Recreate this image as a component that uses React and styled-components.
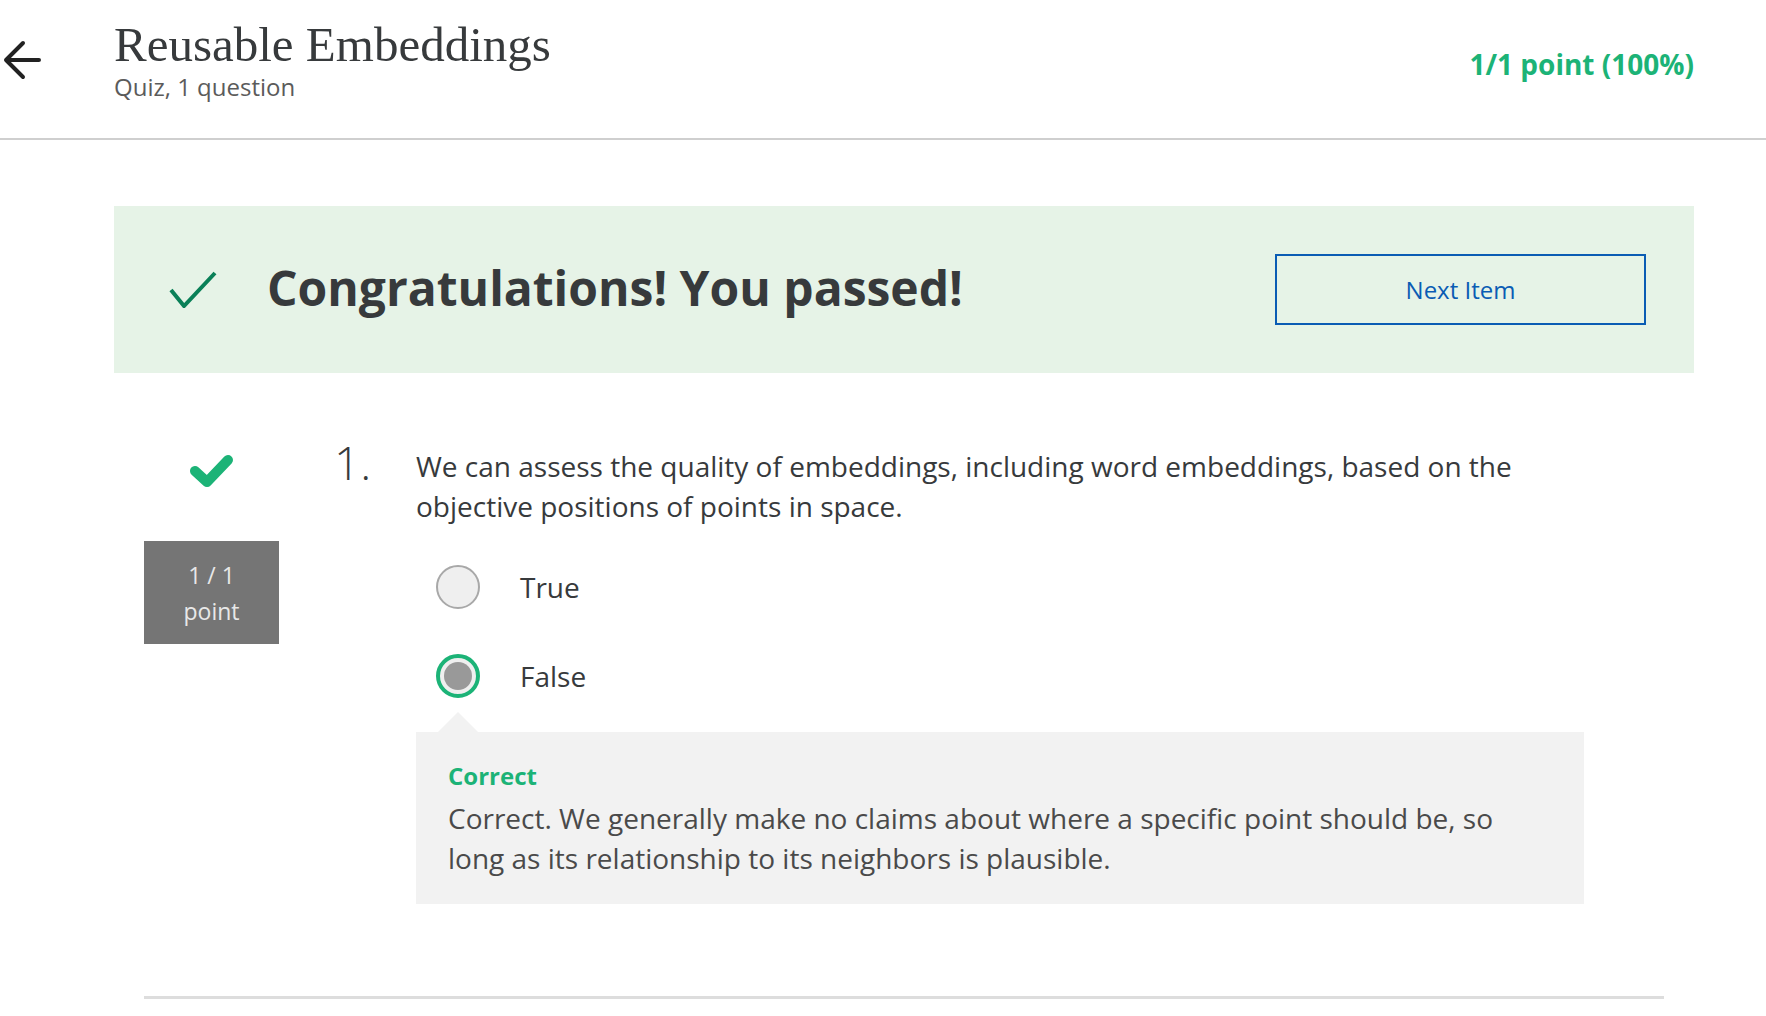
import styled, { createGlobalStyle } from "styled-components";

const GlobalStyle = createGlobalStyle`
  body {
    margin: 0;
    background: #ffffff;
    font-family: "Open Sans", "Liberation Sans", sans-serif;
    color: #373a3c;
  }
`;

const Header = styled.header`
  box-sizing: border-box;
  display: flex;
  align-items: center;
  height: 140px;
  padding: 0 72px 18px 2px;
  border-bottom: 2px solid #cfcfcf;
`;

const BackButton = styled.button`
  display: flex;
  align-items: center;
  justify-content: center;
  width: 40px;
  height: 40px;
  padding: 0;
  margin-right: 72px;
  border: none;
  background: none;
  cursor: pointer;
`;

const TitleBlock = styled.div`
  display: flex;
  flex-direction: column;
`;

const Title = styled.h1`
  margin: 0;
  font-family: "Liberation Serif", "DejaVu Serif", serif;
  font-weight: 400;
  font-size: 49px;
  line-height: 53px;
  color: #373a3c;
`;

const Subtitle = styled.div`
  font-size: 24px;
  line-height: 32px;
  color: #5b5b5b;
`;

const Score = styled.div`
  margin-left: auto;
  margin-top: 8px;
  font-size: 28px;
  font-weight: 700;
  color: #1cb377;
`;

const Main = styled.main`
  padding: 66px 72px 0 114px;
`;

const Banner = styled.section`
  display: flex;
  align-items: center;
  height: 167px;
  padding: 0 48px 0 55px;
  background: #e6f3e7;
`;

const BannerText = styled.h2`
  margin: -4px 0 0 50px;
  font-size: 48px;
  font-weight: 700;
  color: #373a3c;
`;

const NextButton = styled.button`
  margin-left: auto;
  width: 371px;
  height: 71px;
  border: 2px solid #0a5cb4;
  background: transparent;
  color: #0a5cb4;
  font-family: "Open Sans", "Liberation Sans", sans-serif;
  font-size: 24px;
  cursor: pointer;
`;

const Question = styled.section`
  margin: 73px 30px 0;
  padding-bottom: 92px;
  border-bottom: 3px solid #dddddd;
`;

const QuestionRow = styled.div`
  display: flex;
  align-items: flex-start;
`;

const Aside = styled.div`
  flex: none;
  display: flex;
  flex-direction: column;
  align-items: center;
  padding-top: 7px;
  width: 135px;
`;

const PointBox = styled.div`
  margin-top: 52px;
  width: 135px;
  height: 103px;
  background: #757575;
  color: #e8e8e8;
  font-size: 23px;
  line-height: 36px;
  display: flex;
  flex-direction: column;
  align-items: center;
  justify-content: center;
`;

const Number = styled.div`
  flex: none;
  width: 82px;
  margin: -6px 0 0 55px;
  font-size: 46px;
  font-weight: 300;
  line-height: 44px;
  color: #373a3c;
`;

const Body = styled.div`
  flex: none;
  width: 1168px;
  display: flex;
  flex-direction: column;
`;

const Prompt = styled.p`
  margin: 0;
  font-size: 28px;
  line-height: 40px;
  color: #373a3c;
`;

const Options = styled.div`
  display: flex;
  flex-direction: column;
  gap: 45px;
  margin: 39px 0 34px 20px;
`;

const Option = styled.label`
  display: flex;
  align-items: center;
  gap: 40px;
  height: 44px;
  font-size: 28px;
  color: #373a3c;
`;

const Radio = styled.span`
  box-sizing: border-box;
  width: 44px;
  height: 44px;
  border-radius: 50%;
  background: #efefef;
  border: ${(p) => (p.$checked ? "4px solid #1cb377" : "2px solid #a8a8a8")};
  display: flex;
  align-items: center;
  justify-content: center;

  &::after {
    content: "";
    display: ${(p) => (p.$checked ? "block" : "none")};
    width: 28px;
    height: 28px;
    border-radius: 50%;
    background: #999999;
  }
`;

const Feedback = styled.div`
  position: relative;
  padding: 28px 32px 26px;
  background: #f2f2f2;

  &::before {
    content: "";
    position: absolute;
    top: -20px;
    left: 22px;
    border-left: 20px solid transparent;
    border-right: 20px solid transparent;
    border-bottom: 20px solid #f2f2f2;
  }
`;

const FeedbackTitle = styled.div`
  font-size: 24px;
  font-weight: 700;
  line-height: 32px;
  color: #1cb377;
  margin-bottom: 6px;
`;

const FeedbackText = styled.p`
  margin: 0;
  font-size: 28px;
  line-height: 40px;
  color: #4a4a4a;
`;

const ArrowIcon = () => (
  <svg width="40" height="40" viewBox="0 0 40 40" fill="none">
    <path
      d="M37 20H4M21 3L4 20L21 37"
      stroke="#222"
      strokeWidth="4"
      strokeLinecap="round"
      strokeLinejoin="round"
    />
  </svg>
);

const ThinCheck = () => (
  <svg width="48" height="37" viewBox="0 0 48 37" fill="none">
    <path d="M2 19L15 35L46 2" stroke="#0a8058" strokeWidth="4" />
  </svg>
);

const BoldCheck = () => (
  <svg width="47" height="36" viewBox="0 0 47 36" fill="none">
    <path
      d="M7 18L19 29L40 7"
      stroke="#1cb377"
      strokeWidth="10"
      strokeLinecap="round"
      strokeLinejoin="round"
    />
  </svg>
);

export default function App() {
  return (
    <>
      <GlobalStyle />
      <Header>
        <BackButton aria-label="Back">
          <ArrowIcon />
        </BackButton>
        <TitleBlock>
          <Title>Reusable Embeddings</Title>
          <Subtitle>Quiz, 1 question</Subtitle>
        </TitleBlock>
        <Score>1/1 point (100%)</Score>
      </Header>
      <Main>
        <Banner>
          <ThinCheck />
          <BannerText>Congratulations! You passed!</BannerText>
          <NextButton>Next Item</NextButton>
        </Banner>
        <Question>
          <QuestionRow>
            <Aside>
              <BoldCheck />
              <PointBox>
                <span>1 / 1</span>
                <span>point</span>
              </PointBox>
            </Aside>
            <Number>1.</Number>
            <Body>
              <Prompt>
                We can assess the quality of embeddings, including word embeddings, based on the
                objective positions of points in space.
              </Prompt>
              <Options>
                <Option>
                  <Radio />
                  True
                </Option>
                <Option>
                  <Radio $checked />
                  False
                </Option>
              </Options>
              <Feedback>
                <FeedbackTitle>Correct</FeedbackTitle>
                <FeedbackText>
                  Correct. We generally make no claims about where a specific point should be, so
                  long as its relationship to its neighbors is plausible.
                </FeedbackText>
              </Feedback>
            </Body>
          </QuestionRow>
        </Question>
      </Main>
    </>
  );
}
